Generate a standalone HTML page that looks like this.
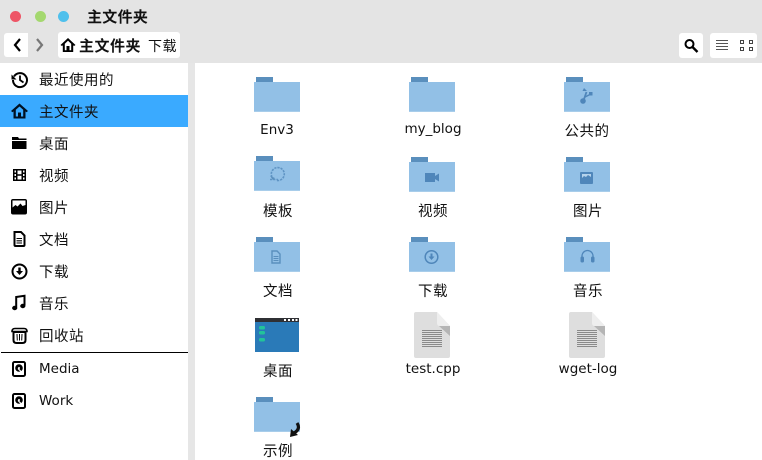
<!DOCTYPE html>
<html><head><meta charset="utf-8">
<style>
html,body{margin:0;padding:0;background:#fff}
#w{position:relative;width:762px;height:460px;overflow:hidden;background:#fff;font-family:"DejaVu Sans","Noto Sans CJK SC",sans-serif;color:#111}
.a{position:absolute}
.t{position:absolute;font-size:14.5px;line-height:18px;white-space:nowrap;font-family:"Noto Sans CJK SC","DejaVu Sans",sans-serif;letter-spacing:.5px}
.e{font-family:"DejaVu Sans",sans-serif;font-size:13.5px;letter-spacing:0}
.s{left:39px}
.l{transform:translateX(-50%)}
svg{position:absolute;overflow:visible}
</style></head><body><div id="w">
<div class="a" style="left:0;top:0;width:762px;height:63px;background:#e4e4e4"></div>
<div class="a" style="left:188px;top:63px;width:7px;height:397px;background:#e6e6e6"></div>
<div class="a" style="left:10px;top:11px;width:11px;height:11px;border-radius:50%;background:#ee5566"></div>
<div class="a" style="left:35px;top:11px;width:11px;height:11px;border-radius:50%;background:#a4d86f"></div>
<div class="a" style="left:58px;top:11px;width:11px;height:11px;border-radius:50%;background:#4fc0ec"></div>
<div class="t" style="left:87px;top:8px;font-weight:bold;font-size:15px;letter-spacing:.3px">主文件夹</div>

<div class="a" style="left:4px;top:33px;width:24px;height:24px;background:#fff;border-radius:3px 0 0 3px"></div>
<svg style="left:0;top:0" width="60" height="60"><path d="M20 39l-5 6 5 6" fill="none" stroke="#000" stroke-width="2.200"/><path d="M37 39l5 6-5 6" fill="none" stroke="#777" stroke-width="2.200"/></svg>
<div class="a" style="left:58px;top:32px;width:122px;height:26px;background:#fff;border-radius:3px"></div>
<svg style="left:60px;top:37px" width="16" height="16"><path d="M0.500 8L8 1l7.500 7-1.500 1-.8-.7V15H2.800V8.300L2 9zM4.800 13.200H6.500V9h3v4.200h1.700V6.800L8 3.800 4.800 6.800z" fill="#000" fill-rule="evenodd"/></svg>
<div class="t" style="left:79px;top:37px;font-weight:bold;font-size:15px;letter-spacing:.5px">主文件夹</div>
<div class="t" style="left:148px;top:37px;font-size:14px;letter-spacing:.5px">下载</div>

<div class="a" style="left:679px;top:33px;width:24px;height:25px;background:#fff;border-radius:3px"></div>
<svg style="left:683px;top:38px" width="16" height="16"><circle cx="6.500" cy="6" r="4" fill="none" stroke="#000" stroke-width="2"/><path d="M9.500 9l5 5" stroke="#000" stroke-width="2.400"/></svg>
<div class="a" style="left:710px;top:33px;width:47px;height:25px;background:#fff;border-radius:3px"></div>
<svg style="left:710px;top:33px" width="47" height="25"><path d="M6 7.500h12M6 10.500h12M6 13.500h12M6 16.500h12" stroke="#555" stroke-width="1"/><path d="M30.500 7.500h3v3h-3zM39.500 7.500h3v3h-3zM30.500 14.500h3v3h-3zM39.500 14.500h3v3h-3z" fill="none" stroke="#444"/></svg>

<!-- sidebar -->
<div class="a" style="left:0;top:95px;width:188px;height:32px;background:#3aaaff"></div>
<div class="a" style="left:1px;top:352px;width:187px;height:1px;background:#000"></div>
<svg style="left:11px;top:71px" width="18" height="18"><path d="M3 5.500A7 7 0 1 1 2 9" fill="none" stroke="#000" stroke-width="2"/><path d="M0.500 3.500l0 5 5 0z" fill="#000"/><path d="M9 4.500V9l3.500 2.500" fill="none" stroke="#000" stroke-width="1.800"/></svg>
<svg style="left:11px;top:103px" width="17" height="16"><path d="M0 8L8.500 0.500 17 8l-1.500 1.200-1-.8V15.500H2.500V8.400l-1 .8zM4.800 13.500H7V9.500h3v4h2.200V6.800L8.500 3.500 4.800 6.800z" fill="#001020" fill-rule="evenodd"/></svg>
<svg style="left:12px;top:137px" width="15" height="13"><path d="M0 0h6l1 1.500h7.500V3H0zM0 4h14.500v8H0z" fill="#000"/></svg>
<svg style="left:13px;top:169px" width="13" height="13"><path d="M0 0h13v12H0zM1.500 1.500v2h1.500v-2zM1.500 5v2h1.500V5zM1.500 8.500v2h1.500v-2zM10 1.500v2h1.500v-2zM10 5v2h1.500V5zM10 8.500v2h1.500v-2zM4.500 1.500v3.800h4V1.500zM4.500 6.700v3.800h4V6.700z" fill="#000" fill-rule="evenodd"/></svg>
<svg style="left:11px;top:199px" width="16" height="16"><rect x="0" y="0" width="16" height="15.500" rx="2" fill="#000"/><path d="M1.500 8.500l3-2.500 2 1.500 3-3 2 2.500 3-1V1.500h-13z" fill="#fff"/></svg>
<svg style="left:13px;top:231px" width="13" height="16"><path d="M1.500 1h6.500l3.500 3.500V14q0 1-1 1H2.500q-1 0-1-1z" fill="none" stroke="#000" stroke-width="2"/><path d="M3.500 7.500h5.500M3.500 9.800h5.500M3.500 12h5.500" stroke="#000" stroke-width="1.100"/></svg>
<svg style="left:11px;top:263px" width="17" height="17"><circle cx="8.500" cy="8.500" r="7" fill="none" stroke="#000" stroke-width="2"/><path d="M7.300 4.500h2.400V8H12l-3.500 4L5 8h2.300z" fill="#000"/></svg>
<svg style="left:12px;top:295px" width="14" height="16"><path d="M4.200 12.500V2L12.500 0.800V10.500" fill="none" stroke="#000" stroke-width="2"/><ellipse cx="2.700" cy="13" rx="2.600" ry="2.200" fill="#000"/><ellipse cx="10.800" cy="11" rx="2.600" ry="2.200" fill="#000"/></svg>
<svg style="left:11px;top:327px" width="17" height="17"><path d="M2.500 5h12v8q0 3-3 3h-6q-3 0-3-3z" fill="none" stroke="#000" stroke-width="2"/><path d="M1 4.500q0-3 3-3h9q3 0 3 3z" fill="none" stroke="#000" stroke-width="1.600"/><path d="M6 7l.3 6.500M8.500 7v6.500M11 7l-.3 6.500" stroke="#000"/></svg>
<svg style="left:12px;top:361px" width="14" height="16"><rect x="1" y="1" width="12" height="14" rx="1.500" fill="none" stroke="#000" stroke-width="2"/><circle cx="7" cy="7" r="3.800" fill="#000"/><path d="M6 7.500l4 4" stroke="#fff" stroke-width="1.200"/><circle cx="7" cy="7" r="1" fill="#fff"/></svg>
<svg style="left:12px;top:393px" width="14" height="16"><rect x="1" y="1" width="12" height="14" rx="1.500" fill="none" stroke="#000" stroke-width="2"/><circle cx="7" cy="7" r="3.800" fill="#000"/><path d="M6 7.500l4 4" stroke="#fff" stroke-width="1.200"/><circle cx="7" cy="7" r="1" fill="#fff"/></svg>

<div class="t s" style="top:71px">最近使用的</div>
<div class="t s" style="top:103px">主文件夹</div>
<div class="t s" style="top:135px">桌面</div>
<div class="t s" style="top:167px">视频</div>
<div class="t s" style="top:199px">图片</div>
<div class="t s" style="top:231px">文档</div>
<div class="t s" style="top:263px">下载</div>
<div class="t s" style="top:295px">音乐</div>
<div class="t s" style="top:327px">回收站</div>
<div class="t s e" style="top:360px">Media</div>
<div class="t s e" style="top:392px">Work</div>

<!-- folders -->
<svg style="left:0;top:0" width="762" height="460">
<defs><g id="f"><path d="M2 0h17v5H2z" fill="#5a8fbd"/><path d="M0 5h46v30H0z" fill="#92c0e6"/><path d="M0 34h46v1H0z" fill="#a8cdea"/></g>
<g id="d"><path d="M416 312h21l13 14v30a2 2 0 0 1-2 2h-32a2 2 0 0 1-2-2v-42a2 2 0 0 1 2-2z" fill="#dedede"/><path d="M437 312l13 14h-10q-3 0-3-3z" fill="#eeeeee"/><path d="M439 326h11v10z" fill="#b5b5b5"/>
<path d="M422 330.500h20M422 332.500h20M422 334.500h20M422 336.500h20M422 338.500h20M422 340.500h20M422 342.500h20M422 344.500h20M422 346.500h20" stroke="#8a8a8a" stroke-width="1"/></g></defs>
<use href="#f" x="254" y="77"/>
<use href="#f" x="409" y="77"/>
<use href="#f" x="564" y="77"/>
<use href="#f" x="254" y="156"/>
<use href="#f" x="409" y="157"/>
<use href="#f" x="564" y="157"/>
<use href="#f" x="254" y="237"/>
<use href="#f" x="409" y="237"/>
<use href="#f" x="564" y="237"/>
<use href="#f" x="254" y="397"/>
<!-- share -->
<g fill="#4f86ba"><circle cx="583" cy="101" r="2.800"/><path d="M583 102l3.500-10" stroke="#4f86ba" stroke-width="1.800"/><path d="M584 88l3 3h-4.500z"/><path d="M585 97l6-3" stroke="#4f86ba" stroke-width="1.500"/><rect x="589" y="92" width="3.500" height="3.500"/></g>
<!-- template -->
<path d="M272 177a6.500 6.500 0 1 1 5 3.500M270 179.500h8" fill="none" stroke="#5f94c4" stroke-width="1.600" stroke-dasharray="2.200 1"/>
<path d="M270 176l3 4 2-2z" fill="#5a8fbd"/>
<!-- video -->
<path d="M425 173h10v9h-10zM435 176l4-2.500v8l-4-2.500z" fill="#4f86ba"/>
<!-- pictures -->
<rect x="580" y="172" width="13" height="12" rx="1" fill="#4f86ba"/><path d="M582 178l2-2 2 1 2-2 3 2v-3h-9z" fill="#b5d3ec"/>
<!-- doc -->
<path d="M272 251h5l3 3v9h-8z" fill="none" stroke="#5a8fbd" stroke-width="1.400"/><path d="M273.500 256.500h5M273.500 258.500h5M273.500 260.500h5" stroke="#5a8fbd" stroke-width=".9"/>
<!-- download -->
<circle cx="431.500" cy="257" r="6.300" fill="none" stroke="#4f86ba" stroke-width="1.500"/><path d="M430.500 253.500h2v3h2l-3 3.500-3-3.500h2z" fill="#4f86ba"/>
<!-- music -->
<path d="M582 258v-2a5.500 5.500 0 0 1 11 0v2" fill="none" stroke="#4f86ba" stroke-width="1.300"/><rect x="580.500" y="256.500" width="3.500" height="6" rx="1.500" fill="#4f86ba"/><rect x="591" y="256.500" width="3.500" height="6" rx="1.500" fill="#4f86ba"/>
<!-- link arrow -->
<path d="M297 423q4 6-3 10" fill="none" stroke="#111" stroke-width="3.200"/>
<path d="M290 437l1-8 7 6z" fill="#111"/>
<!-- desktop -->
<rect x="255" y="318" width="44" height="34" fill="#2a7ab8"/>
<rect x="255" y="318" width="44" height="4" fill="#2f3034"/>
<path d="M284 319h2v2h-2zM288 319h2v2h-2zM292 319h2v2h-2zM295.500 319h2v2h-2z" fill="#fff"/>
<rect x="259" y="326" width="6" height="3.500" rx="1.500" fill="#22c39a"/><rect x="259" y="331" width="6" height="3.500" rx="1.500" fill="#22c39a"/><rect x="259" y="338" width="6" height="3.500" rx="1.500" fill="#22c39a"/>
<!-- files -->
<use href="#d"/>
<use href="#d" x="155"/>
</svg>

<div class="t l e" style="left:277px;top:121px">Env3</div>
<div class="t l e" style="left:433px;top:120px">my_blog</div>
<div class="t l" style="left:587px;top:122px">公共的</div>
<div class="t l" style="left:278px;top:202px">模板</div>
<div class="t l" style="left:433px;top:202px">视频</div>
<div class="t l" style="left:588px;top:202px">图片</div>
<div class="t l" style="left:278px;top:282px">文档</div>
<div class="t l" style="left:433px;top:282px">下载</div>
<div class="t l" style="left:588px;top:282px">音乐</div>
<div class="t l" style="left:278px;top:362px">桌面</div>
<div class="t l e" style="left:433px;top:360px">test.cpp</div>
<div class="t l e" style="left:588px;top:360px">wget-log</div>
<div class="t l" style="left:278px;top:442px">示例</div>
</div></body></html>
